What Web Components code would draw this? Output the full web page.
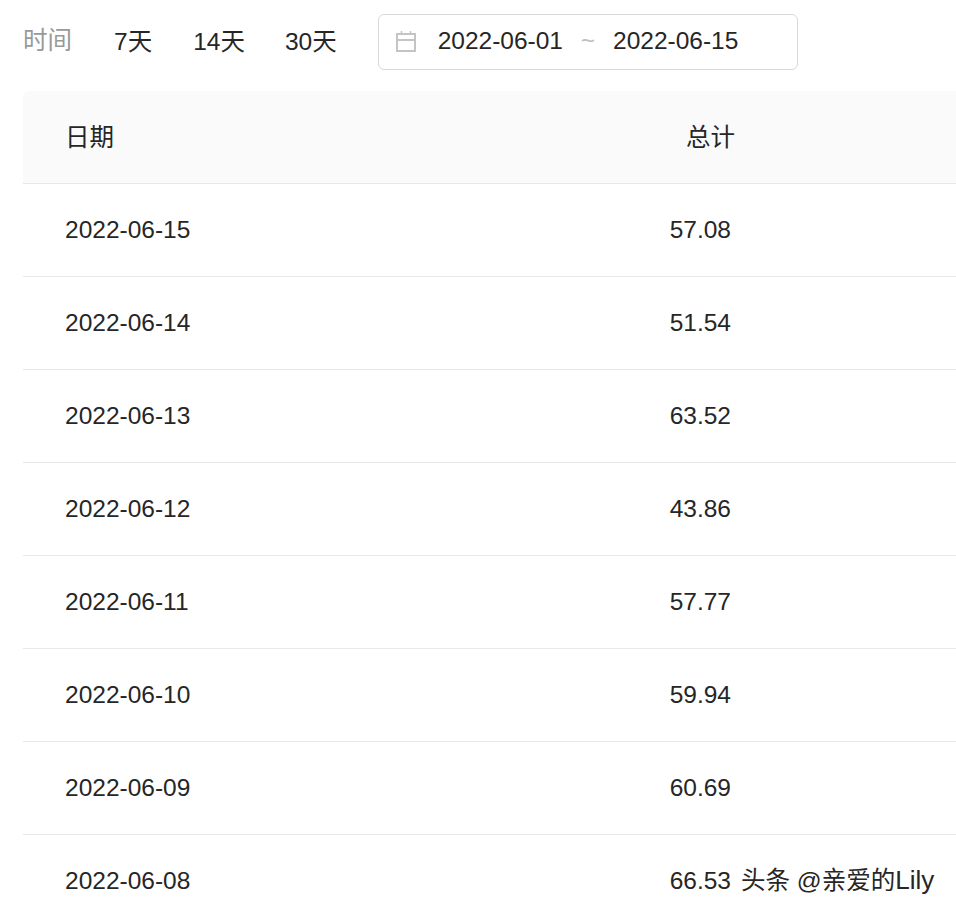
<!DOCTYPE html>
<html lang="zh">
<head>
<meta charset="utf-8">
<title>时间</title>
<style>
    html, body {
        margin: 0;
        height: 915px;
        overflow: hidden;
        background: #fff;
        font-family: "Liberation Sans", "Noto Sans CJK SC", sans-serif;
    }
</style>
</head>
<body>
<report-page></report-page>

<script>
class dateRange extends HTMLElement
{
    constructor(){
        super();
        this.attachShadow({mode: "open"}).innerHTML = /*html*/`
        <style>
        :host {
            display: flex;
            align-items: center;
            box-sizing: border-box;
            width: 420px;
            height: 56px;
            padding: 0 0 2px 17px;
            border: 1px solid #d9d9d9;
            border-radius: 6px;
            background: #fff;
            color: #262626;
        }
        svg { display: block; width: 20px; height: 22px; margin-right: 22px; }
        .sep { width: 50px; text-align: center; color: #bfbfbf; }
        </style>
        <svg viewBox="0 0 20 22" fill="none" stroke="#c4c4c4" stroke-width="2">
            <path d="M1 4h18v17H1z"/>
            <path d="M1 10h18"/>
            <path d="M5.5 1v4M14.500 1v4" stroke-width="1.500"/>
        </svg>
        <span>${this.getAttribute("from")}</span>
        <span class="sep">~</span>
        <span>${this.getAttribute("to")}</span>
        `
    }
}
customElements.define('date-range', dateRange);

class filterBar extends HTMLElement
{
    constructor(){
        super();
        this.attachShadow({mode: "open"}).innerHTML = /*html*/`
        <style>
        :host {
            display: flex;
            align-items: center;
            height: 84px;
            color: #262626;
        }
        .label { width: 91px; padding-bottom: 8px; color: #999; }
        button {
            all: unset;
            padding-bottom: 6px;
            margin-right: 41px;
        }
        button + button { margin-right: 40px; }
        button:last-of-type { margin-right: 41px; }
        </style>
        <span class="label">时间</span>
        <button>7天</button>
        <button>14天</button>
        <button>30天</button>
        <date-range from="2022-06-01" to="2022-06-15"></date-range>
        `
    }
}
customElements.define('filter-bar', filterBar);

class dataRow extends HTMLElement
{
    constructor(){
        super();
        this.attachShadow({mode: "open"}).innerHTML = /*html*/`
        <style>
        :host {
            display: grid;
            grid-template-columns: 500px 170px;
            align-items: center;
            box-sizing: border-box;
            height: 93px;
            padding-left: 42px;
            border-bottom: 1px solid #e8e8e8;
            color: #262626;
        }
        :host([head]) {
            padding-bottom: 4px;
            background: #fafafa;
            border-radius: 6px 6px 0 0;
        }
        .num { text-align: right; }
        :host(:not([head])) .num { padding-right: 4px; }
        </style>
        <div><slot name="date"></slot></div>
        <div class="num"><slot name="total"></slot></div>
        `
    }
}
customElements.define('data-row', dataRow);

const rows = [
    ["2022-06-15", "57.08"],
    ["2022-06-14", "51.54"],
    ["2022-06-13", "63.52"],
    ["2022-06-12", "43.86"],
    ["2022-06-11", "57.77"],
    ["2022-06-10", "59.94"],
    ["2022-06-09", "60.69"],
    ["2022-06-08", "66.53"],
]

class dataTable extends HTMLElement
{
    constructor(){
        super();
        const body = rows.map(r => `
            <data-row><span slot="date">${r[0]}</span><span slot="total">${r[1]}</span></data-row>
        `).join("")

        this.attachShadow({mode: "open"}).innerHTML = /*html*/`
        <style>
        :host { display: block; width: 960px; }
        </style>
        <data-row head><span slot="date">日期</span><span slot="total">总计</span></data-row>
        ${body}
        `
    }
}
customElements.define('data-table', dataTable);

class reportPage extends HTMLElement
{
    constructor(){
        super();
        this.attachShadow({mode: "open"}).innerHTML = /*html*/`
        <style>
        :host {
            display: block;
            position: relative;
            height: 915px;
            padding-left: 23px;
            overflow: hidden;
            font-size: 24.500px;
            font-family: "Liberation Sans", "Noto Sans CJK SC", sans-serif;
        }
        filter-bar { margin-bottom: 7px; }
        /* watermark of the site the picture came from */
        .mark {
            position: absolute;
            left: 741px;
            top: 865px;
            font-size: 24.500px;
            line-height: 30px;
            white-space: nowrap;
            color: #262626;
            text-shadow: 0 0 2px #fff;
        }
        .mark span { font-size: 26px; }
        </style>
        <filter-bar></filter-bar>
        <data-table></data-table>
        <div class="mark">头条 @亲爱的<span>Lily</span></div>
        `
    }
}
customElements.define('report-page', reportPage);
</script>
</body>
</html>
